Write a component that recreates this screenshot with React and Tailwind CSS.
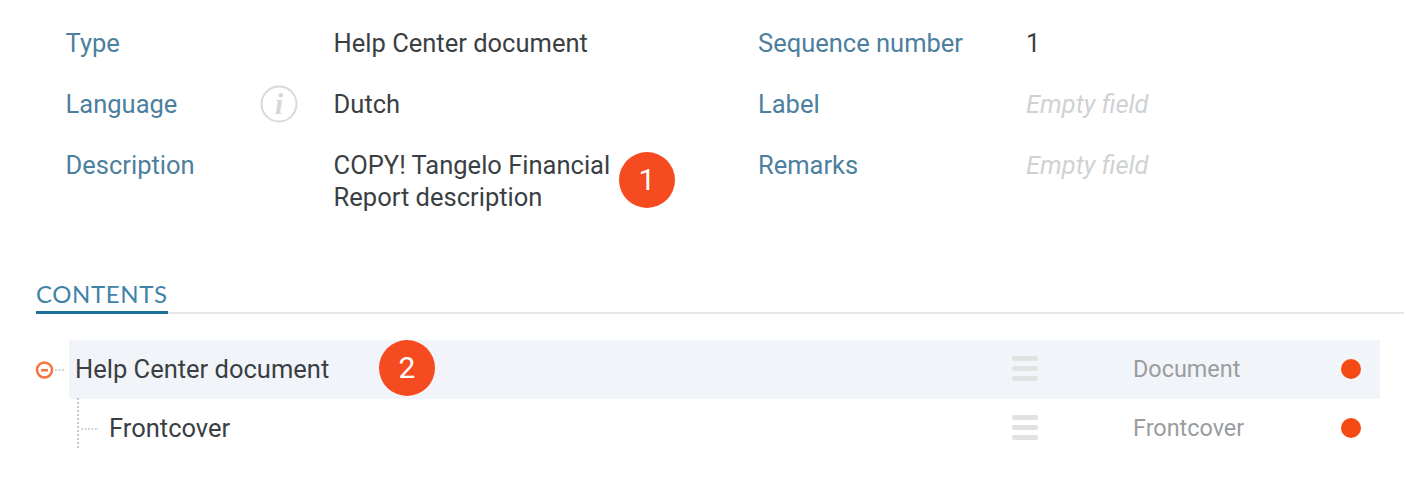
import React from "react";

function Badge({ n, className }) {
  return (
    <div
      className={`absolute flex h-[56px] w-[56px] items-center justify-center rounded-full bg-[#f64a21] text-[30px] text-white ${className}`}
    >
      {n}
    </div>
  );
}

function Field({ label, children, labelWidth = "w-[268px]" }) {
  return (
    <div className="flex items-start">
      <div className={`${labelWidth} relative shrink-0 text-[#4d7f9e]`}>{label}</div>
      <div className="text-[#3a3f44]">{children}</div>
    </div>
  );
}

const Empty = () => <span className="italic text-[#cfd2d4]">Empty field</span>;

function InfoIcon() {
  return (
    <svg viewBox="0 0 38 38" className="absolute left-[194px] top-[-3px] h-[38px] w-[38px]">
      <circle cx="19" cy="19" r="17.5" fill="none" stroke="#d9d9d9" strokeWidth="2" />
      <text x="19" y="29" textAnchor="middle" fontFamily="Liberation Serif, serif" fontStyle="italic" fontWeight="700" fontSize="29" fill="#d3d6da">
        i
      </text>
    </svg>
  );
}

function Lines() {
  return (
    <div className="flex w-[26px] flex-col gap-[5px]">
      <div className="h-[5px] rounded-[2px] bg-[#e2e2e2]" />
      <div className="h-[5px] rounded-[2px] bg-[#e2e2e2]" />
      <div className="h-[5px] rounded-[2px] bg-[#e2e2e2]" />
    </div>
  );
}

function Row({ title, type, active, indent }) {
  return (
    <div className={`flex h-[59px] w-[1311px] items-center pb-[2px] ${active ? "bg-[#f1f5f9]" : ""}`}>
      <div className={`${indent} w-[943px] shrink-0 text-[#3a3f44]`}>{title}</div>
      <Lines />
      <div className="ml-[95px] w-[208px] shrink-0 text-[23.4px] text-[#9a9c9e]">{type}</div>
      <div className="h-[20px] w-[20px] rounded-full bg-[#f64a14]" />
    </div>
  );
}

export default function App() {
  return (
    <div className="relative h-[492px] w-[1406px] overflow-hidden bg-white font-['Roboto',sans-serif] text-[25.5px] leading-[32px]">
      <div className="grid grid-cols-[692.4px_1fr] gap-y-[29px] pl-[65.6px] pt-[27px]">
        <Field label="Type">Help Center document</Field>
        <Field label="Sequence number">1</Field>
        <Field
          label={
            <>
              Language
              <InfoIcon />
            </>
          }
        >
          Dutch
        </Field>
        <Field label="Label">
          <Empty />
        </Field>
        <Field label="Description">
          <div className="w-[300px]">COPY! Tangelo Financial Report description</div>
        </Field>
        <Field label="Remarks">
          <Empty />
        </Field>
      </div>
      <Badge n="1" className="left-[619px] top-[152px]" />

      <div className="ml-[36px] mr-[2px] mt-[66px] border-b-2 border-[#e6e8e9]">
        <div className="mb-[-2px] w-fit border-b-[3px] border-[#1f6f9b] pb-[2px] font-['Lato',sans-serif] text-[24px] leading-[30px] tracking-[0.6px] text-[#3f83a8]">
          CONTENTS
        </div>
      </div>

      <div className="relative ml-[69px] mt-[26px]">
        <Row title="Help Center document" type="Document" active indent="pl-[6px]" />
        <Row title="Frontcover" type="Frontcover" indent="pl-[40px]" />
      </div>

      <svg viewBox="0 0 70 100" className="absolute left-[34px] top-[358px] h-[100px] w-[70px]">
        <circle cx="10.5" cy="12" r="7.5" fill="none" stroke="#f9733f" strokeWidth="2.5" />
        <rect x="7" y="11" width="7" height="2.5" fill="#f9733f" />
        <path d="M21 12H31" stroke="#c8c8c8" strokeWidth="1.5" strokeDasharray="2 1.5" />
        <path d="M44 40V90" stroke="#c8c8c8" strokeWidth="2" strokeDasharray="2 2" />
        <path d="M47 71H65" stroke="#c8c8c8" strokeWidth="1.5" strokeDasharray="2 1.5" />
      </svg>
      <Badge n="2" className="left-[379px] top-[340px]" />
    </div>
  );
}
